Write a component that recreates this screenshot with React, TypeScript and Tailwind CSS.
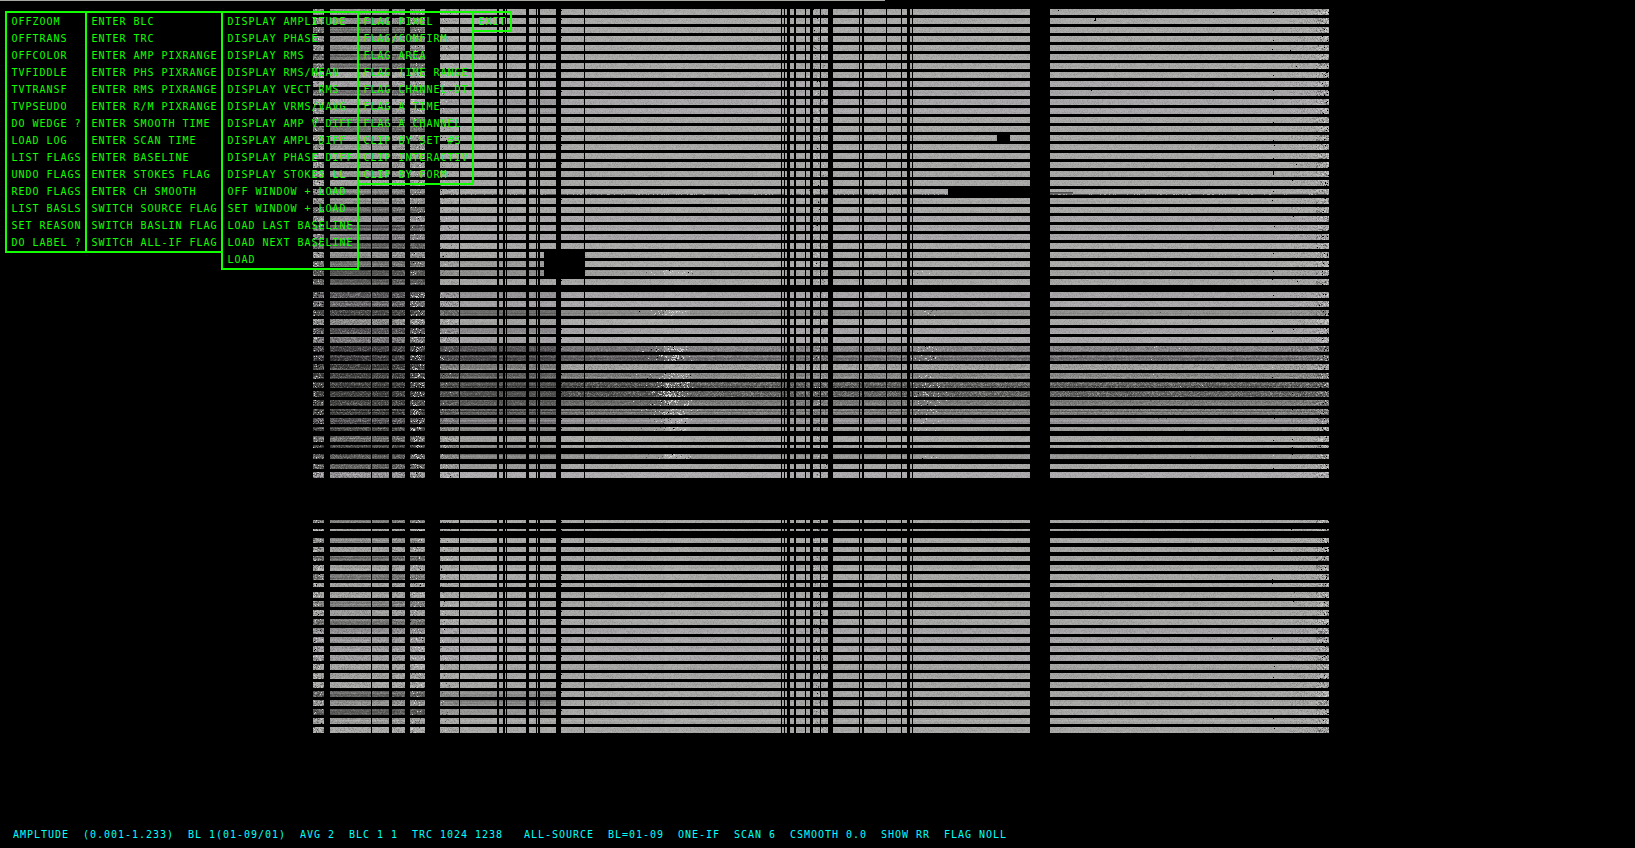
import React from "react";

const MENUS: { width: string; items: string[] }[] = [
  {
    width: "w-[82px]",
    items: ["OFFZOOM", "OFFTRANS", "OFFCOLOR", "TVFIDDLE", "TVTRANSF", "TVPSEUDO", "DO WEDGE ?", "LOAD LOG", "LIST FLAGS", "UNDO FLAGS", "REDO FLAGS", "LIST BASLS", "SET REASON", "DO LABEL ?"],
  },
  {
    width: "w-[138px]",
    items: ["ENTER BLC", "ENTER TRC", "ENTER AMP PIXRANGE", "ENTER PHS PIXRANGE", "ENTER RMS PIXRANGE", "ENTER R/M PIXRANGE", "ENTER SMOOTH TIME", "ENTER SCAN TIME", "ENTER BASELINE", "ENTER STOKES FLAG", "ENTER CH SMOOTH", "SWITCH SOURCE FLAG", "SWITCH BASLIN FLAG", "SWITCH ALL-IF FLAG"],
  },
  {
    width: "w-[138px]",
    items: ["DISPLAY AMPLITUDE", "DISPLAY PHASE", "DISPLAY RMS", "DISPLAY RMS/MEAN", "DISPLAY VECT RMS", "DISPLAY VRMS/VAVG", "DISPLAY AMP V DIFF", "DISPLAY AMPL DIFF", "DISPLAY PHASE DIFF", "DISPLAY STOKES LL", "OFF WINDOW + LOAD", "SET WINDOW + LOAD", "LOAD LAST BASELINE", "LOAD NEXT BASELINE", "LOAD"],
  },
  {
    width: "w-[117px]",
    items: ["FLAG PIXEL", "FLAG/CONFIRM", "FLAG AREA", "FLAG TIME RANGE", "FLAG CHANNEL-DT", "FLAG A TIME", "FLAG A CHANNEL", "CLIP BY SET #S", "CLIP INTERACTIV", "CLIP BY FORM"],
  },
  { width: "w-[40px]", items: ["EXIT"] },
];

const STATUS =
  "AMPLTUDE  (0.001-1.233)  BL 1(01-09/01)  AVG 2  BLC 1 1  TRC 1024 1238   ALL-SOURCE  BL=01-09  ONE-IF  SCAN 6  CSMOOTH 0.0  SHOW RR  FLAG NOLL";

// Flagged channels: [start, end)
const GAPS: [number, number][] = [
  [324, 330], [371, 372], [389, 392], [405, 410], [425, 440], [459, 460], [497, 499], [503, 505],
  [506, 507], [526, 529], [536, 537], [538, 540], [556, 561], [584, 585], [781, 782], [784, 785],
  [787, 790], [794, 796], [805, 806], [810, 813], [820, 821], [828, 833], [859, 860], [862, 864],
  [886, 887], [901, 902], [907, 910], [912, 913], [1030, 1050],
];

type Row = { y: number; h: number; s: [number, number, number, number] };

// Scans: mean brightness in the four channel groups
const ROWS: Row[] = [];
const LEFT_TOP = [150, 138, 112, 142, 140, 104, 115, 165, 158, 116, 168, 148, 120, 115, 158, 150, 160, 152, 155, 163, 132, 142, 100, 150, 98, 132, 88, 145, 100, 80, 98];
LEFT_TOP.forEach((left, i) => {
  const y = 9 + i * 9;
  const mid = y >= 99 && y <= 108 ? 155 : y === 261 ? 150 : y === 270 ? 138 : 167;
  ROWS.push({ y, h: 6, s: [left, mid, y === 270 ? 157 : 168, y === 270 ? 160 : 168] });
});
const MIDDLE: [number, number, number, number, number, number][] = [
  [292, 6, 85, 148, 166, 166], [301, 6, 105, 163, 172, 170], [310, 6, 65, 98, 130, 138], [319, 6, 140, 162, 172, 170],
  [328, 6, 85, 138, 165, 165], [337, 6, 122, 162, 173, 170], [346, 6, 58, 78, 110, 128], [355, 6, 60, 75, 92, 110],
  [364, 6, 72, 130, 162, 162], [373, 6, 66, 94, 122, 135], [382, 6, 58, 72, 72, 88], [391, 6, 58, 74, 76, 92],
  [400, 6, 62, 82, 98, 115], [409, 6, 65, 90, 115, 124], [418, 6, 70, 112, 140, 145], [427, 4, 80, 135, 155, 158],
  [436, 6, 112, 158, 170, 168], [445, 3, 75, 140, 165, 165], [454, 5, 80, 125, 145, 145], [464, 5, 88, 150, 165, 165],
  [472, 6, 140, 172, 172, 170],
];
MIDDLE.forEach(([y, h, a, b, c, d]) => ROWS.push({ y, h, s: [a, b, c, d] }));
const LEFT_LOW = [125, 165, 132, 162, 118, 158, 112, 160, 160, 132, 158, 112, 145, 152, 157, 152, 167, 162, 167, 98, 145, 88, 155, 167];
const LOW_H = [3, 2, 5, 5, 5, 6, 6, 4];
LEFT_LOW.forEach((left, i) => {
  const mid = i === 19 ? 138 : i === 20 ? 135 : i === 21 ? 150 : 168;
  ROWS.push({ y: 520 + i * 9, h: LOW_H[i] ?? 6, s: [left, mid, 167, 166] });
});

function random(seed: number) {
  let a = seed;
  return () => {
    a = (a + 0x6d2b79f5) | 0;
    let t = Math.imul(a ^ (a >>> 15), 1 | a);
    t = (t + Math.imul(t ^ (t >>> 7), 61 | t)) ^ t;
    return ((t ^ (t >>> 14)) >>> 0) / 4294967296;
  };
}

const rnd = random(4711);
const gauss = () => rnd() + rnd() + rnd() + rnd() - 2;

const ZONES: [number, number, number][] = [
  [313, 425, 0],
  [440, 556, 1],
  [561, 664, 2],
  [664, 690, 4],
  [690, 1329, 3],
];

const isPurple = (y: number) =>
  (y >= 81 && y <= 108) || (y >= 216 && y <= 234) || (y >= 292 && y <= 301) || (y >= 328 && y <= 355) || y === 418 || y === 472 || (y >= 628 && y <= 655);

const LINES: { x: number; y: number; w: number; fill: string }[] = [];
ROWS.forEach((row) => {
  const purple = isPurple(row.y);
  for (let line = 0; line < row.h; line++) {
    const offset = gauss();
    ZONES.forEach(([x0, x1, z]) => {
      const base = z === 4 ? Math.min(170, row.s[2] + 22) : row.s[z];
      const v = Math.round(base + offset * Math.min(24, (174 - base) * 0.35 + 2));
      LINES.push({ x: x0, y: row.y + line, w: x1 - x0, fill: purple ? `rgb(${v + 1},${v - 2},${v + 1})` : `rgb(${v},${v},${v - 1})` });
    });
  }
});

// Tile of single-pixel grain, split in four tones
const TILE_W = 173;
const TILE_H = 71;
const GRAIN = ["", "", "", ""];
for (let y = 0; y < TILE_H; y++) {
  for (let x = 0; x < TILE_W; x++) {
    const g = gauss();
    const k = g < -0.75 ? 0 : g < -0.25 ? 1 : g > 0.75 ? 3 : g > 0.25 ? 2 : -1;
    if (k >= 0) GRAIN[k] += `M${x} ${y}h1v1h-1z`;
  }
}

// Isolated bright, grey and dropped samples
let WHITE = "";
let BLACK = "";
let DARK = "";
const scatter = (cx: number, spread: number, row: Row, n: number, white: number, black = 0.2) => {
  for (let i = 0; i < n; i++) {
    const x = Math.round(cx + gauss() * spread);
    const y = row.y + Math.floor(rnd() * row.h);
    const p = `M${x} ${y}h1v1h-1z`;
    if (x < 313 || x >= 1329) continue;
    if (rnd() < white) WHITE += p;
    else if (rnd() < black) BLACK += p;
    else DARK += p;
  }
};
ROWS.forEach((row) => {
  const dim = Math.max(0, 170 - row.s[2]) / 100;
  if (dim > 0.1) {
    scatter(673, 15, row, Math.round(8 + dim * 48), 0.72);
    scatter(655, 22, row, Math.round(dim * 18), 0.25, 0.05);
    scatter(925, 14, row, Math.round(dim * 28), 0.6, 0.1);
    scatter(1170, 30, row, Math.round(dim * 8), 0.2, 0);
  }
  const middle = row.y > 290 && row.y < 480;
  scatter(417, 8, row, middle ? 18 : 6, 0.6, 0.1);
  scatter(316, 6, row, 5, 0.5);
  scatter(443, 6, row, 3, 0.4, 0.1);
  scatter(1326, 6, row, 8, 0.5, 0.5);
  scatter(818, 6, row, 3, 0.5);
  if (rnd() < 0.4) scatter(1273, 1, row, 1, 0.2, 0.8);
  if (rnd() < 0.2) scatter(1293, 3, row, 1, 0.1, 0.8);
  if (rnd() < 0.5) BLACK += `M561 ${row.y + 1}h1v1h-1z`;
});
for (let x = 330; x < 1329; x++) if (rnd() < 0.75) DARK += `M${x} 194h1v1h-1z`;

const GAP_ROWS: [number, number][] = ROWS.slice(0, -1).map((r, i) => [r.y + r.h, ROWS[i + 1].y]);

function Raster() {
  return (
    <svg className="col-start-1 row-start-1 block" width="1635" height="848" viewBox="0 0 1635 848" shapeRendering="crispEdges">
      <defs>
        <pattern id="grain" width={TILE_W} height={TILE_H} patternUnits="userSpaceOnUse">
          <path d={GRAIN[0]} fill="#000" fillOpacity="0.4" />
          <path d={GRAIN[1]} fill="#000" fillOpacity="0.17" />
          <path d={GRAIN[2]} fill="#fff" fillOpacity="0.14" />
          <path d={GRAIN[3]} fill="#fff" fillOpacity="0.34" />
        </pattern>
      </defs>
      <rect width="885" height="1" fill="#a8a8a4" />
      {LINES.map((l, i) => (
        <rect key={i} x={l.x} y={l.y} width={l.w} height="1" fill={l.fill} />
      ))}
      <rect x="313" y="9" width="1016" height="724" fill="url(#grain)" opacity="0.22" />
      <rect x="313" y="9" width="112" height="724" fill="url(#grain)" opacity="0.18" />
      <rect x="392" y="9" width="33" height="724" fill="url(#grain)" opacity="0.25" />
      <rect x="313" y="9" width="11" height="724" fill="url(#grain)" opacity="0.6" />
      <rect x="440" y="9" width="19" height="724" fill="url(#grain)" opacity="0.18" />
      <rect x="313" y="292" width="146" height="186" fill="url(#grain)" opacity="0.3" />
      <rect x="460" y="346" width="869" height="72" fill="url(#grain)" opacity="0.2" />
      <rect x="561" y="382" width="768" height="15" fill="url(#grain)" opacity="0.35" />
      <rect x="813" y="9" width="15" height="724" fill="url(#grain)" opacity="0.25" />
      <rect x="1290" y="9" width="39" height="724" fill="url(#grain)" opacity="0.2" />
      <rect x="1316" y="9" width="13" height="724" fill="url(#grain)" opacity="0.5" />
      <path d={DARK} fill="#565656" />
      <rect x="1050" y="192" width="23" height="1" fill="#505050" />
      <rect x="1050" y="193" width="23" height="1" fill="#686868" />
      <path d={WHITE} fill="#d4d4d4" />
      <path d={BLACK} fill="#000" />
      {GAP_ROWS.map(([a, b]) => (
        <rect key={a} x="300" y={a} width="1040" height={b - a} fill="#000" />
      ))}
      {GAPS.map(([a, b]) => (
        <rect key={a} x={a} y="9" width={b - a} height="724" fill="#000" />
      ))}
      <rect x="544" y="249" width="41" height="30" fill="#000" />
      <rect x="997" y="135" width="13" height="6" fill="#000" />
      <rect x="948" y="189" width="82" height="6" fill="#000" />
      <path d="M1095 18h1v3h-2v-1h1zM1058 10h1v1h-1zM1273 171h1v4h-1zM1091 90h1v1h-1z" fill="#000" />
    </svg>
  );
}

export default function App() {
  return (
    <div className="grid h-[848px] w-[1635px] overflow-hidden bg-black font-['DejaVu_Sans_Mono',monospace] text-[10px] tracking-[0.98px]">
      <Raster />
      <div className="z-10 col-start-1 row-start-1 flex flex-col justify-between pt-[11px] pb-[5px]">
        <div className="flex items-start pl-[5px] text-[#11ff00]">
          {MENUS.map((menu, i) => (
            <ul key={i} className={`${menu.width} ${i > 0 ? "-ml-[2px]" : ""} shrink-0 border-2 border-[#11ff00] pl-[4.4px]`}>
              {menu.items.map((item) => (
                <li key={item} className="h-[17px] leading-[17px] whitespace-pre">
                  {item}
                </li>
              ))}
            </ul>
          ))}
        </div>
        <div className="pl-[13px] leading-[17px] whitespace-pre text-[#00ffff]">{STATUS}</div>
      </div>
    </div>
  );
}
